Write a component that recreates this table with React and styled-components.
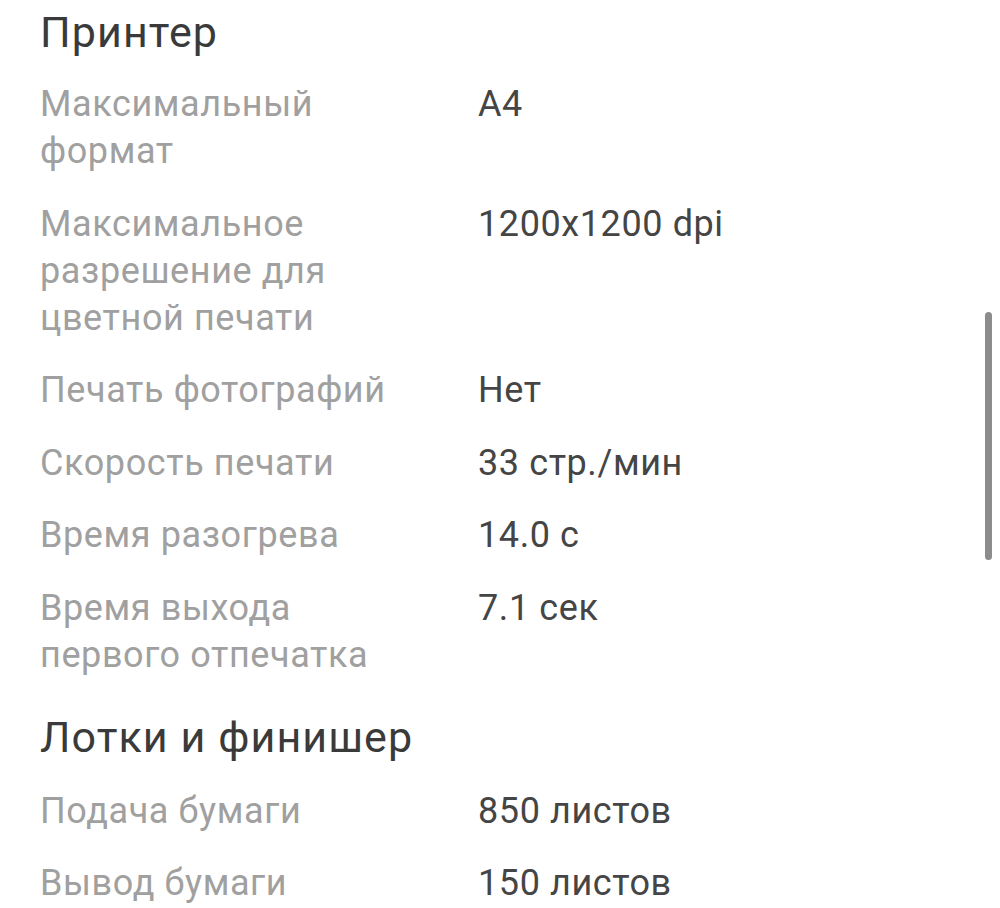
import React from "react";
import styled, { createGlobalStyle } from "styled-components";

const GlobalStyle = createGlobalStyle`
  html, body {
    margin: 0;
    padding: 0;
    background: #ffffff;
  }
  body {
    font-family: Roboto, "Noto Sans", "Liberation Sans", sans-serif;
  }
`;

const specs = [
  {
    title: "Принтер",
    rows: [
      ["Максимальный формат", "A4"],
      ["Максимальное разрешение для цветной печати", "1200x1200 dpi"],
      ["Печать фотографий", "Нет"],
      ["Скорость печати", "33 стр./мин"],
      ["Время разогрева", "14.0 с"],
      ["Время выхода первого отпечатка", "7.1 сек"],
    ],
  },
  {
    title: "Лотки и финишер",
    rows: [
      ["Подача бумаги", "850 листов"],
      ["Вывод бумаги", "150 листов"],
    ],
  },
];

const Screen = styled.div`
  position: relative;
  width: 1000px;
  height: 908px;
  overflow: hidden;
  background: #ffffff;
`;

const Content = styled.div`
  padding: 7px 40px 0 40px;
  display: flex;
  flex-direction: column;
`;

const Section = styled.section`
  display: flex;
  flex-direction: column;
  padding-top: ${(p) => (p.$first ? "0" : "33px")};
`;

const SectionTitle = styled.h2`
  margin: 0 0 ${(p) => (p.$first ? "24px" : "26px")} 0;
  font-size: 43px;
  font-weight: 400;
  line-height: 50px;
  letter-spacing: 1.1px;
  color: #3a3a3a;
`;

const Rows = styled.div`
  display: flex;
  flex-direction: column;
  gap: 25.5px;
`;

const Row = styled.div`
  display: grid;
  grid-template-columns: 380px 1fr;
  column-gap: 58px;
  font-size: 36px;
  line-height: 47px;
  letter-spacing: 0.6px;
`;

const Label = styled.div`
  color: #a0a0a0;
`;

const Value = styled.div`
  color: #454545;
`;

const ScrollThumb = styled.div`
  position: absolute;
  left: 985px;
  top: 312px;
  width: 7px;
  height: 248px;
  border-radius: 4px;
  background: #8c8c8c;
`;

export default function App() {
  return (
    <>
      <GlobalStyle />
      <Screen>
        <Content>
          {specs.map((section, i) => (
            <Section key={section.title} $first={i === 0}>
              <SectionTitle $first={i === 0}>{section.title}</SectionTitle>
              <Rows>
                {section.rows.map(([label, value]) => (
                  <Row key={label}>
                    <Label>{label}</Label>
                    <Value>{value}</Value>
                  </Row>
                ))}
              </Rows>
            </Section>
          ))}
        </Content>
        <ScrollThumb />
      </Screen>
    </>
  );
}
